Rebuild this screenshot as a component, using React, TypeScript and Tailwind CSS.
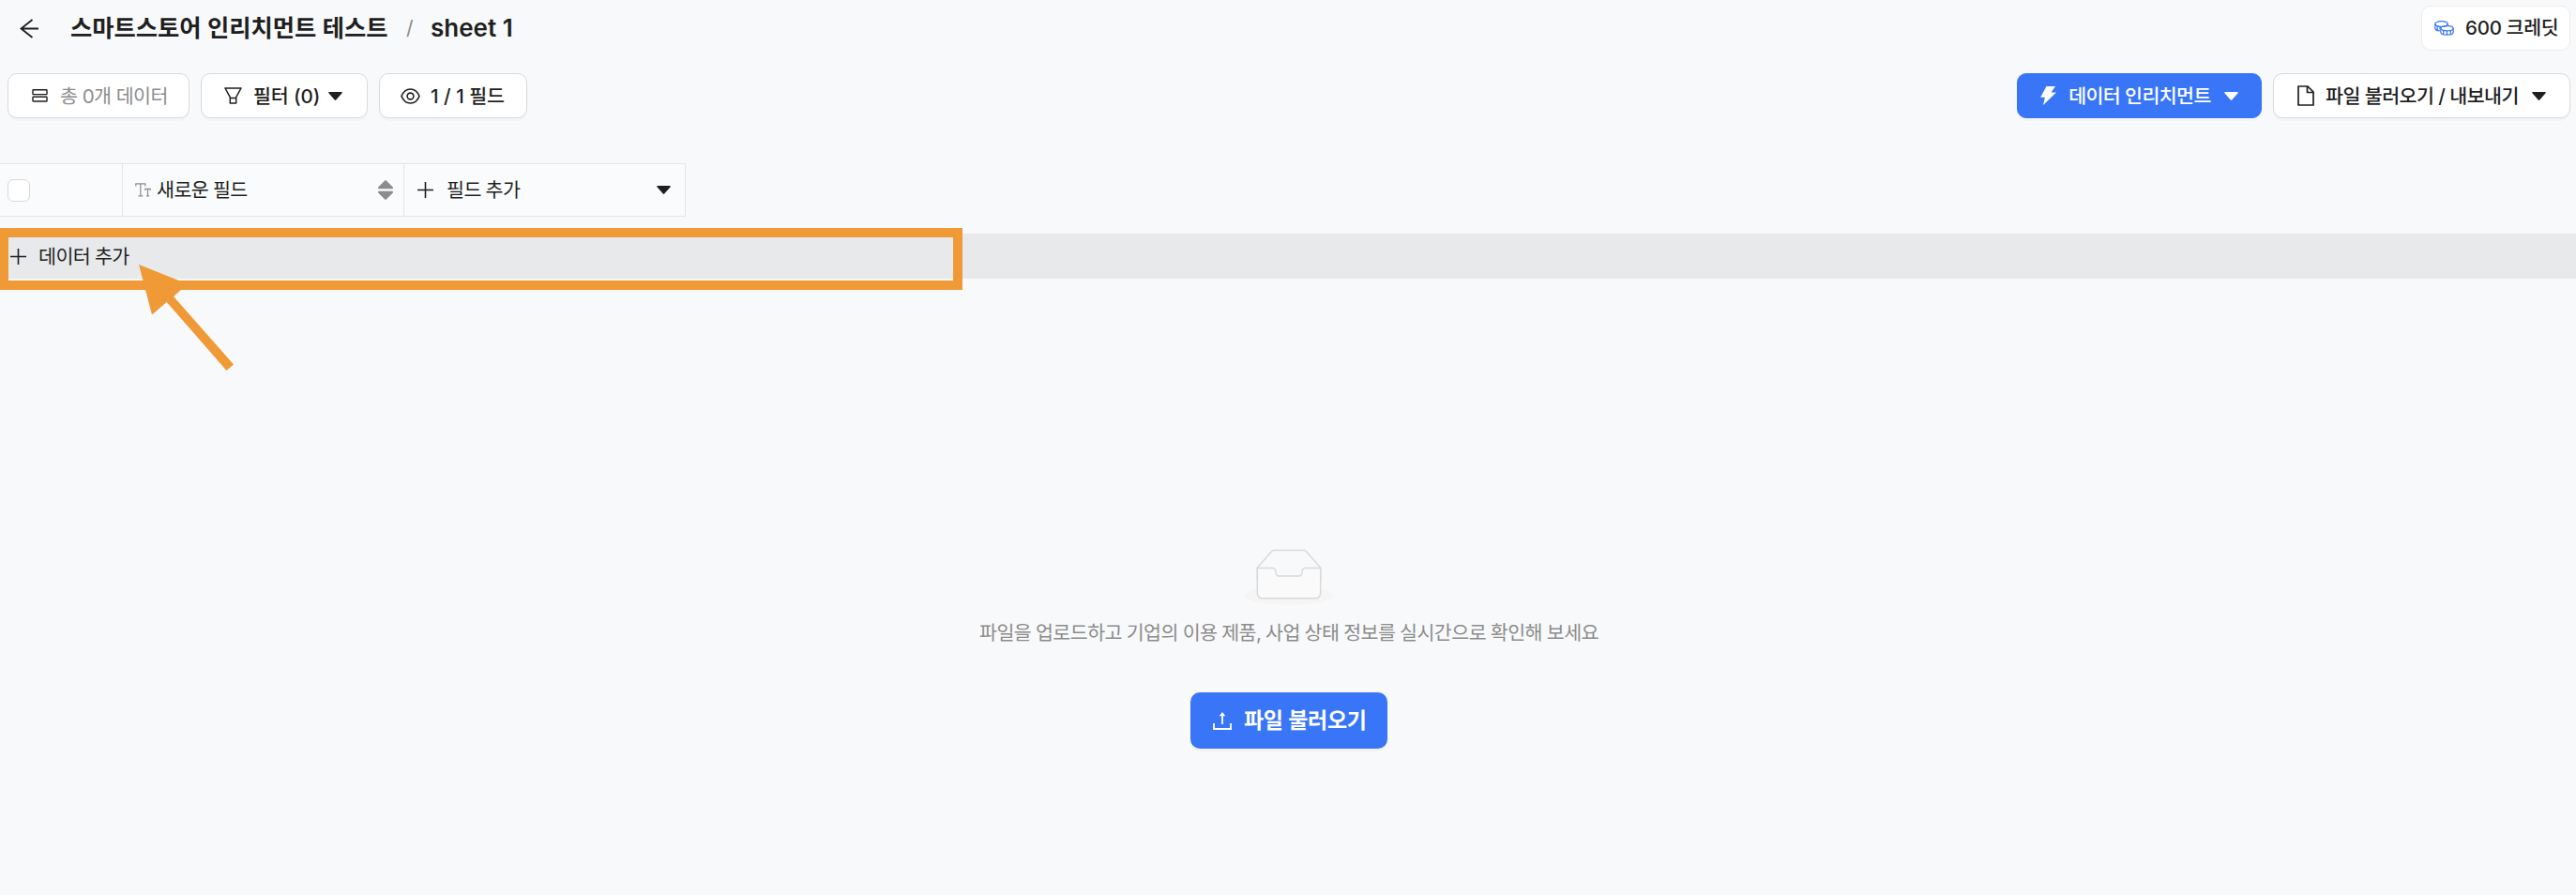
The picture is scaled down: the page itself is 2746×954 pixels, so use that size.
import type { ReactNode } from 'react'
import clsx from 'clsx'

function Caret({ className }: { className?: string }) {
  return (
    <svg width="15" height="9" viewBox="0 0 15 9" fill="currentColor" className={clsx('shrink-0', className)}>
      <path d="M1 0h13c.8 0 1.1.8.6 1.3L8.2 8.5c-.4.5-1 .5-1.4 0L.4 1.3C-.1.8.2 0 1 0z" />
    </svg>
  )
}

function PlusIcon() {
  return (
    <svg width="17" height="17" viewBox="0 0 17 17" stroke="currentColor" strokeWidth="1.6" className="shrink-0">
      <path d="M8.5 0v17M0 8.5h17" />
    </svg>
  )
}

function BackIcon() {
  return (
    <svg width="21" height="21" viewBox="0 0 21 21" fill="none" stroke="currentColor" strokeWidth="1.8" className="shrink-0">
      <path d="M13.5 1L1.5 10.5l12 9.5M1.5 10.5H20" />
    </svg>
  )
}

function RowsIcon() {
  return (
    <svg width="17" height="14" viewBox="0 0 17 14" fill="none" stroke="currentColor" strokeWidth="1.4" className="shrink-0">
      <rect x="1" y="0.8" width="15" height="4.8" rx="0.5" />
      <rect x="1" y="8.2" width="15" height="4.8" rx="0.5" />
    </svg>
  )
}

function FilterIcon() {
  return (
    <svg width="19" height="18" viewBox="0 0 19 18" fill="none" stroke="currentColor" strokeWidth="1.5" strokeLinejoin="round" className="shrink-0">
      <path d="M1 1h17l-5.300 9.600V17H6.300v-6.400L1 1zM6.300 11.400h6.400" />
    </svg>
  )
}

function EyeIcon() {
  return (
    <svg width="21" height="17" viewBox="0 0 21 17" fill="none" stroke="currentColor" strokeWidth="1.6" className="shrink-0">
      <path d="M1 8.500c2-5 5.300-7.500 9.500-7.500S18 3.500 20 8.500c-2 5-5.300 7.500-9.500 7.500S3 13.500 1 8.500z" />
      <circle cx="10.500" cy="8.500" r="3.400" />
    </svg>
  )
}

function BoltIcon() {
  return (
    <svg width="17" height="20" viewBox="0 0 17 20" fill="currentColor" className="shrink-0">
      <path d="M6.400 0H16l-4.500 6.600H17L3 20l1.900-8.300H.2L6.400 0z" />
    </svg>
  )
}

function FileIcon() {
  return (
    <svg width="18" height="22" viewBox="0 0 18 22" fill="none" stroke="currentColor" strokeWidth="1.700" strokeLinejoin="round" className="shrink-0">
      <path d="M1 1h10l6 6v14H1V1zM10.500 1v6.500H17" />
    </svg>
  )
}

function CoinsIcon() {
  return (
    <svg width="21" height="16" viewBox="0 0 21 16" fill="none" stroke="currentColor" strokeWidth="1.200" className="shrink-0">
      <ellipse cx="7.500" cy="3.600" rx="6.700" ry="2.900" />
      <path d="M.8 3.600v4.300c0 1.500 2.100 2.700 5 2.900M14.200 3.600v2.100M3.200 6v3.900M6 6.600v3" />
      <ellipse cx="13.500" cy="8.300" rx="6.700" ry="2.600" />
      <path d="M6.800 8.300v3.900c0 1.700 3 3 6.700 3s6.700-1.300 6.700-3V8.300M9.700 10.500v4M13.500 11v4M17.300 10.500v4" />
    </svg>
  )
}

function TextTypeIcon() {
  return (
    <svg width="17" height="15" viewBox="0 0 17 15" fill="none" stroke="currentColor" strokeWidth="1.200" className="shrink-0">
      <path d="M.8 3.500V.8h10v2.700M5.800.8v13M3.500 13.900h4.800M10.800 8V6.300h5.500V8M13.500 6.300v7.600M12 13.900h3.200" />
    </svg>
  )
}

function SorterIcon() {
  return (
    <svg width="16" height="21" viewBox="0 0 16 21" fill="currentColor" className="shrink-0">
      <path d="M7.200.5c.4-.5 1.200-.5 1.600 0l6.800 6.700c.8.900.3 2-.7 2H1.100c-1 0-1.500-1.100-.7-2L7.200.5zM7.200 20.500c.4.500 1.200.5 1.600 0l6.800-6.700c.8-.9.3-2-.7-2H1.100c-1 0-1.500 1.100-.7 2l6.800 6.700z" />
    </svg>
  )
}

function UploadIcon() {
  return (
    <svg width="20" height="19" viewBox="0 0 20 19" fill="none" stroke="currentColor" strokeWidth="1.800" className="shrink-0">
      <path d="M1 12v6h18v-6M10 13V3" />
      <path d="M10 0l3.300 4.200H6.700L10 0z" fill="currentColor" stroke="none" />
    </svg>
  )
}

function EmptyIcon() {
  return (
    <svg width="94" height="60" viewBox="0 0 64 41">
      <g transform="translate(0 1)" fill="none">
        <ellipse fill="#f5f5f5" cx="32" cy="33" rx="32" ry="7" />
        <g stroke="#d9d9d9">
          <path d="M55 12.760L44.854 1.258C44.367.474 43.656 0 42.907 0H21.093c-.749 0-1.460.474-1.947 1.257L9 12.761V22h46v-9.240z" />
          <path
            fill="#fafafa"
            d="M41.613 15.931c0-1.605.994-2.930 2.227-2.931H55v18.137C55 33.260 53.680 35 52.050 35h-40.100C10.320 35 9 33.259 9 31.137V13h11.160c1.233 0 2.227 1.323 2.227 2.928v.022c0 1.605 1.005 2.901 2.237 2.901h14.752c1.232 0 2.237-1.308 2.237-2.913v-.007z"
          />
        </g>
      </g>
    </svg>
  )
}

function Button({ className, children }: { className: string; children: ReactNode }) {
  return (
    <button
      className={clsx(
        'flex h-12 shrink-0 items-center rounded-[10px] border font-medium shadow-[0_3px_0_rgba(0,0,0,0.02)]',
        className,
      )}
    >
      {children}
    </button>
  )
}

function Header() {
  return (
    <header className="flex h-[54px] items-start justify-between pl-[21px] pr-1.5 pt-1.5">
      <div className="flex h-12 items-center text-[25.3px] font-semibold tracking-normal [word-spacing:0px]">
        <BackIcon />
        <h1 className="ml-[33px] w-[340px]">스마트스토어 인리치먼트 테스트</h1>
        <span className="ml-[18px] w-[7px] text-[21px] font-normal text-[#8c8c8c]">/</span>
        <span className="ml-[19px] text-[26px]">sheet 1</span>
      </div>
      <div className="flex h-12 w-[159px] items-center rounded-[10px] border border-[#ebebed] bg-white pl-[13px] font-medium">
        <span className="text-[#3875f7]">
          <CoinsIcon />
        </span>
        <span className="ml-3 text-[20.5px] tracking-[-0.2px]">600 크레딧</span>
      </div>
    </header>
  )
}

function Toolbar() {
  return (
    <div className="mt-6 flex items-center justify-between pl-2 pr-1.5">
      <div className="flex gap-3">
        <Button className="w-[194px] border-[#d9d9d9] bg-white pl-[25px]">
          <RowsIcon />
          <span className="ml-[13px] pt-0.5 font-normal text-[#8c8c8c]">총 0개 데이터</span>
        </Button>
        <Button className="w-[178px] border-[#d9d9d9] bg-white pl-6">
          <FilterIcon />
          <span className="ml-3 w-[70px] pt-0.5 tracking-[-0.1px]">필터 (0)</span>
          <Caret className="ml-[10px]" />
        </Button>
        <Button className="w-[158px] border-[#d9d9d9] bg-white pl-[22px]">
          <EyeIcon />
          <span className="ml-[11px] pt-0.5 tracking-normal [word-spacing:0px]">1 / 1 필드</span>
        </Button>
      </div>
      <div className="flex gap-3">
        <Button className="w-[261px] border-[#3875f7] bg-[#3875f7] pl-6 text-white">
          <BoltIcon />
          <span className="ml-[13px] w-[152px] pt-0.5 tracking-[-0.6px]">데이터 인리치먼트</span>
          <Caret className="ml-[14px]" />
        </Button>
        <Button className="w-[317px] border-[#d9d9d9] bg-white pl-[25px]">
          <FileIcon />
          <span className="ml-3 w-[205px] pt-0.5">파일 불러오기 / 내보내기</span>
          <Caret className="ml-[15px]" />
        </Button>
      </div>
    </div>
  )
}

function TableHead() {
  return (
    <div className="mt-12 flex h-[57px] w-[731px] border-y border-[#e5e5e7] bg-[#fafbfd]">
      <div className="flex w-[131px] items-center border-r border-[#e5e5e7] pl-2">
        <span className="size-6 rounded-md border border-[#d9d9d9] bg-white" />
      </div>
      <div className="flex w-[300px] items-center border-r border-[#e5e5e7] pl-[13px] pr-[11px]">
        <span className="text-[#8c8c8c]">
          <TextTypeIcon />
        </span>
        <span className="ml-1.5 grow pt-px">새로운 필드</span>
        <span className="text-[#8c8c8c]">
          <SorterIcon />
        </span>
      </div>
      <div className="flex w-[300px] items-center border-r border-[#e5e5e7] pl-[14px] pr-[15px]">
        <PlusIcon />
        <span className="ml-[14px] grow pt-px">필드 추가</span>
        <Caret />
      </div>
    </div>
  )
}

function AddRow() {
  return (
    <div className="relative mt-[18px] flex h-12 items-center bg-[#e8e9eb] pl-[11px]">
      <PlusIcon />
      <span className="ml-[13px] pt-0.5">데이터 추가</span>
      {/* Highlight over the row */}
      <div className="absolute -left-px -top-1.5 h-[66px] w-[1027px] border-10 border-[#f09937]" />
      <svg width="110" height="120" viewBox="0 0 110 120" fill="#f09937" className="absolute left-[145px] top-[30px]">
        <path d="M3 3l52 20.800L40 37l64 72.600-7.500 6.400-63.800-73L17 56.500z" />
      </svg>
    </div>
  )
}

function EmptyState() {
  return (
    <div className="mt-72 flex flex-col items-center pl-[2px]">
      <EmptyIcon />
      <p className="mt-[15px] text-[#8c8c8c]">
        파일을 업로드하고 기업의 이용 제품, 사업 상태 정보를 실시간으로 확인해 보세요
      </p>
      <button className="mt-12 flex h-[60px] w-[210px] items-center rounded-[10px] bg-[#3875f7] pl-6 text-[23px] font-semibold text-white shadow-[0_3px_0_rgba(0,0,0,0.02)]">
        <UploadIcon />
        <span className="ml-[13px] tracking-[-0.3px]">파일 불러오기</span>
      </button>
    </div>
  )
}

export default function App() {
  return (
    <div className="h-[954px] w-[2746px] overflow-hidden whitespace-nowrap bg-[#f8f9fb] font-['Inter','Noto_Sans_CJK_KR',sans-serif] text-[20.6px] leading-[30px] tracking-[-0.55px] text-[#1f1f1f] [word-spacing:-0.5px]">
      <Header />
      <Toolbar />
      <TableHead />
      <AddRow />
      <EmptyState />
    </div>
  )
}
